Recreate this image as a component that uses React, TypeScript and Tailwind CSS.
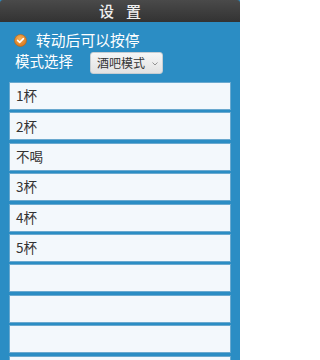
import React from 'react';

const items = ['1杯', '2杯', '不喝', '3杯', '4杯', '5杯', '', '', '', ''];

const font = { fontFamily: '"Noto Sans CJK SC", "Liberation Sans", sans-serif' };

function CheckDot() {
  return (
    <svg width="13" height="13" viewBox="0 0 13 13">
      <defs>
        <radialGradient id="g" cx="45%" cy="35%" r="65%">
          <stop offset="0%" stopColor="#f6b25a" />
          <stop offset="100%" stopColor="#d9771c" />
        </radialGradient>
      </defs>
      <circle cx="6.5" cy="6.5" r="6" fill="url(#g)" stroke="#b8650f" strokeWidth="0.6" />
      <path d="M3.6 6.4 L5.7 8.4 L9.4 4.6" fill="none" stroke="#fff" strokeWidth="1.6" strokeLinecap="round" strokeLinejoin="round" />
    </svg>
  );
}

export default function App() {
  return (
    <div className="w-[240px] h-[360px] overflow-hidden bg-[#2b8dc4] flex flex-col" style={font}>
      <div className="h-[22px] shrink-0 bg-gradient-to-b from-[#4a4a4a] to-[#333333] flex items-center justify-center gap-[12px] rounded-t-[3px]">
        <span className="text-[15px] leading-[22px] font-medium text-[#efefef]">设</span>
        <span className="text-[15px] leading-[22px] font-medium text-[#efefef]">置</span>
      </div>
      <div className="flex items-center pl-[14px] mt-[11px] h-[14px]">
        <CheckDot />
        <span className="ml-[9px] text-[14.8px] leading-none text-white">转动后可以按停</span>
      </div>
      <div className="flex items-center pl-[15px] mt-[5px]">
        <span className="text-[14.5px] leading-none text-white -mt-[3px]">模式选择</span>
        <div className="ml-[17px] w-[73px] h-[22px] rounded-[3px] bg-gradient-to-b from-[#f6f6f6] to-[#e2e2e2] border border-[#c6cdd2] flex items-center pl-[6px]">
          <span className="text-[12px] leading-none text-[#333]">酒吧模式</span>
          <svg width="6" height="4" viewBox="0 0 6 4" className="ml-[7px] mt-[2px]">
            <path d="M0.5 0.5 L3 3 L5.5 0.5" fill="none" stroke="#888" strokeWidth="0.9" />
          </svg>
        </div>
      </div>
      <div className="flex flex-col gap-[2.4px] mt-[8px] pl-[9px] pr-[9px]">
        {items.map((t, i) => (
          <div
            key={i}
            className="h-[28px] shrink-0 bg-[#f3f8fc] border border-[#6aa9cf] flex items-center pl-[6px]"
          >
            <span className="text-[13.5px] leading-none text-[#333]">{t}</span>
          </div>
        ))}
      </div>
    </div>
  );
}
